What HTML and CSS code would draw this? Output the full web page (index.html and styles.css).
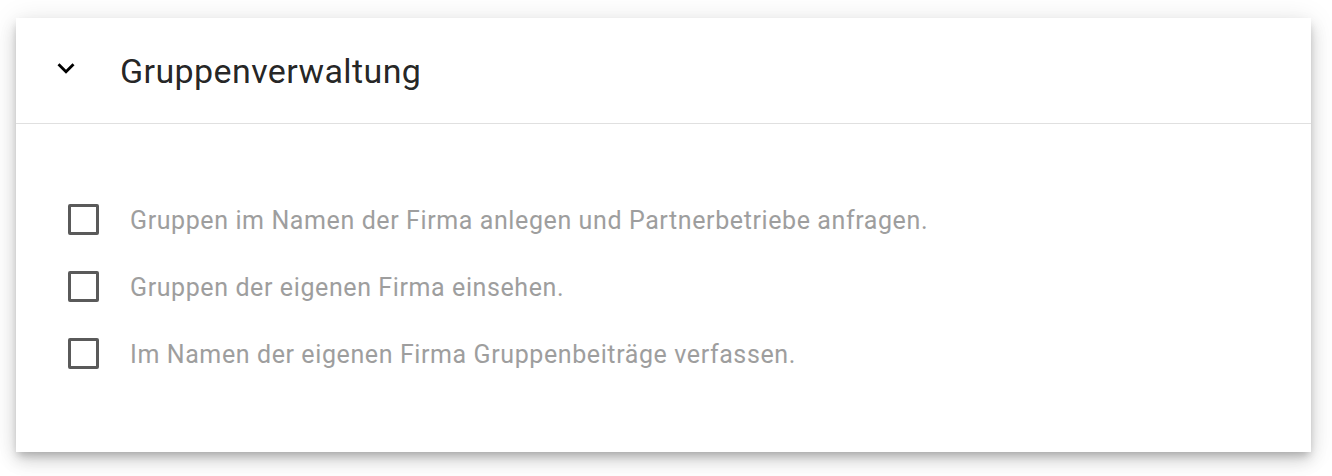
FILE: index.html
```html
<!DOCTYPE html>
<html lang="de">
<head>
  <meta charset="UTF-8">
  <title>Gruppenverwaltung</title>
  <link rel="stylesheet" href="styles.css">
</head>
<body>
  <div class="panel">
    <div class="panel-header">
      <svg class="chevron" viewBox="0 0 24 24" width="34" height="34">
        <path d="M16.59 8.59L12 13.17 7.41 8.59 6 10l6 6 6-6z" fill="#000"/>
      </svg>
      <span class="panel-title">Gruppenverwaltung</span>
    </div>

    <div class="panel-body">
      <label class="option">
        <span class="box"></span>
        <span class="option-text">Gruppen im Namen der Firma anlegen und Partnerbetriebe anfragen.</span>
      </label>
      <label class="option">
        <span class="box"></span>
        <span class="option-text">Gruppen der eigenen Firma einsehen.</span>
      </label>
      <label class="option">
        <span class="box"></span>
        <span class="option-text">Im Namen der eigenen Firma Gruppenbeiträge verfassen.</span>
      </label>
    </div>
  </div>
</body>
</html>
```

FILE: styles.css
```css
body {
  margin: 0;
  padding: 18px 21px 24px 16px;
  background: #fff;
  font-family: Roboto, "Noto Sans", sans-serif;
}

.panel {
  background: #fff;
  box-shadow: 0 5px 8px -2px rgba(0,0,0,0.2), 0 9px 16px 0 rgba(0,0,0,0.14), 0 2px 26px 0 rgba(0,0,0,0.1);
}

.panel-header {
  display: flex;
  align-items: center;
  height: 106px;
  box-sizing: border-box;
  padding-left: 33px;
  border-bottom: 1px solid #e0e0e0;
}

.chevron {
  display: block;
  margin-top: -6px;
}

.panel-title {
  margin-left: 37px;
  font-size: 34px;
  letter-spacing: 0.4px;
  color: rgba(0,0,0,0.87);
}

.panel-body {
  padding: 63px 0 64px 52px;
}

.option {
  display: flex;
  align-items: center;
  height: 67px;
}

.box {
  width: 31px;
  height: 31px;
  box-sizing: border-box;
  border: 3px solid #5a5a5a;
  border-radius: 2px;
  margin-top: -2px;
}

.option-text {
  margin-left: 31px;
  font-size: 25px;
  letter-spacing: 0.6px;
  color: #9e9e9e;
}
```
